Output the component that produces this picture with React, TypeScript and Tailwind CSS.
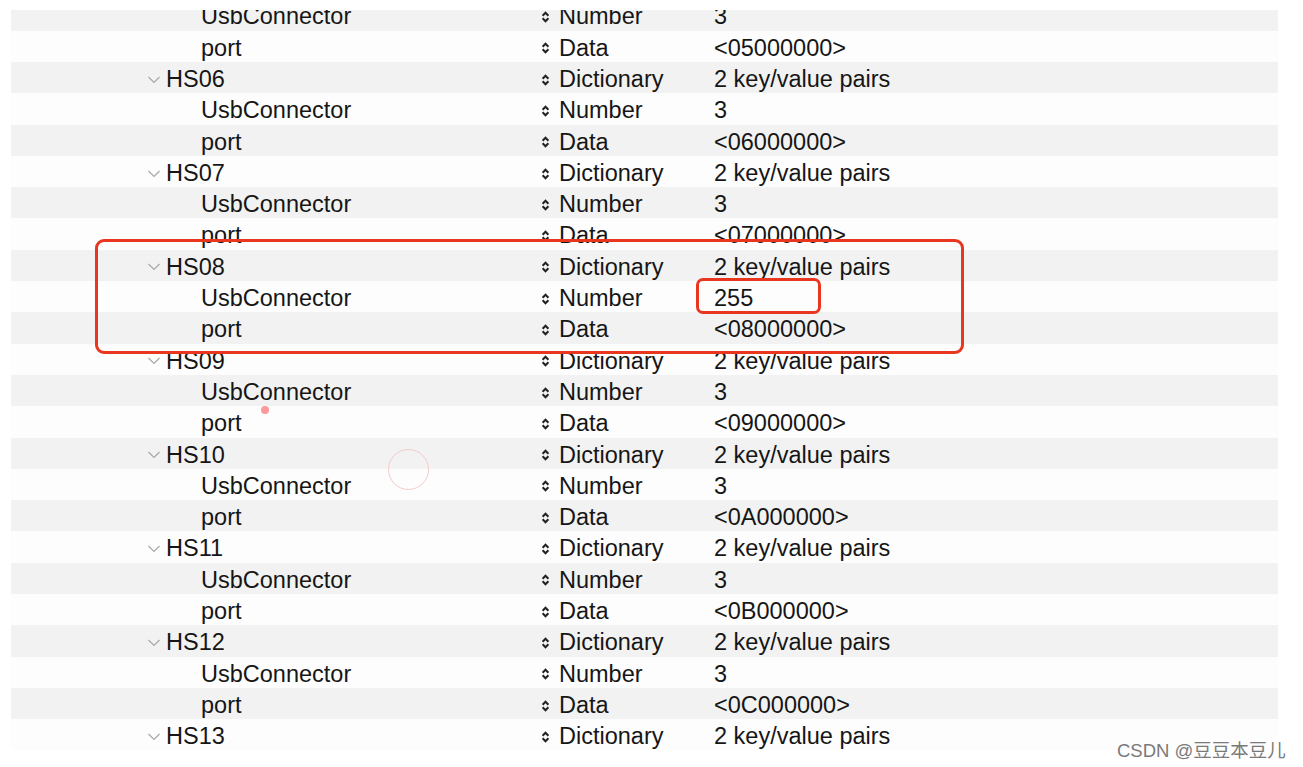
type Row = {
  name: string
  level: 1 | 2
  type: string
  value: string
}

const rows: Row[] = [
  { name: 'UsbConnector', level: 2, type: 'Number', value: '3' },
  { name: 'port', level: 2, type: 'Data', value: '<05000000>' },
]

const ports = ['06', '07', '08', '09', '10', '11', '12']
const hex: Record<string, string> = {
  '06': '06', '07': '07', '08': '08', '09': '09', '10': '0A', '11': '0B', '12': '0C',
}

ports.forEach(p => {
  rows.push({ name: `HS${p}`, level: 1, type: 'Dictionary', value: '2 key/value pairs' })
  rows.push({ name: 'UsbConnector', level: 2, type: 'Number', value: p === '08' ? '255' : '3' })
  rows.push({ name: 'port', level: 2, type: 'Data', value: `<${hex[p]}000000>` })
})
rows.push({ name: 'HS13', level: 1, type: 'Dictionary', value: '2 key/value pairs' })

function Chevron() {
  return (
    <svg width="14" height="8" viewBox="0 0 14 8" className="mr-[5px]">
      <polyline points="1.5,1 7,6.5 12.5,1" fill="none" stroke="#a8a8a8" strokeWidth="1.2" />
    </svg>
  )
}

function UpDown() {
  return (
    <svg width="9" height="12" viewBox="0 0 9 12" className="mr-[9px]">
      <polyline points="1.6,4.8 4.5,1.8 7.4,4.8" fill="none" stroke="#222" strokeWidth="2" />
      <polyline points="1.6,7.2 4.5,10.2 7.4,7.2" fill="none" stroke="#222" strokeWidth="2" />
    </svg>
  )
}

export default function App() {
  return (
    <div
      className="relative w-[1303px] h-[767px] overflow-hidden bg-white text-[#161616]"
      style={{ fontFamily: '"Liberation Sans", Arial, sans-serif' }}
    >
      <div className="mt-[10px] ml-[11px] w-[1267px] h-[740px] overflow-hidden">
        <div className="mt-[-10.6px]">
          {rows.map((row, i) => (
            <div
              key={i}
              className={`grid grid-cols-[530px_173px_1fr] items-center h-[31.3px] text-[23.5px] ${
                i % 2 === 0 ? 'bg-[#f2f2f2]' : 'bg-[#fdfdfd]'
              }`}
            >
              <div className="flex items-center">
                {row.level === 1 ? (
                  <div className="flex items-center pl-[136px]">
                    <Chevron />
                    <span>{row.name}</span>
                  </div>
                ) : (
                  <span className="pl-[190px]">{row.name}</span>
                )}
              </div>
              <div className="flex items-center">
                <UpDown />
                <span>{row.type}</span>
              </div>
              <div>{row.value}</div>
            </div>
          ))}
        </div>
      </div>

      {/* annotations */}
      <div className="absolute left-[95px] top-[239px] w-[869px] h-[115px] rounded-[9px] border-[3px] border-[#e8361f]" />
      <div className="absolute left-[696px] top-[278px] w-[125px] h-[36px] rounded-[7px] border-[3px] border-[#e8361f]" />
      <div className="absolute left-[261px] top-[406px] w-[8px] h-[8px] rounded-full bg-[#fb9a9a]" />
      <div className="absolute left-[388px] top-[449px] w-[41px] h-[41px] rounded-full border-[1.5px] border-[#f6caca]" />

      <div
        className="absolute left-[1117px] top-[737px] text-[18.5px] text-[#7a7a7a]"
        style={{ fontFamily: '"Liberation Sans", "Noto Sans CJK SC", sans-serif' }}
      >
        CSDN @豆豆本豆儿
      </div>
    </div>
  )
}
